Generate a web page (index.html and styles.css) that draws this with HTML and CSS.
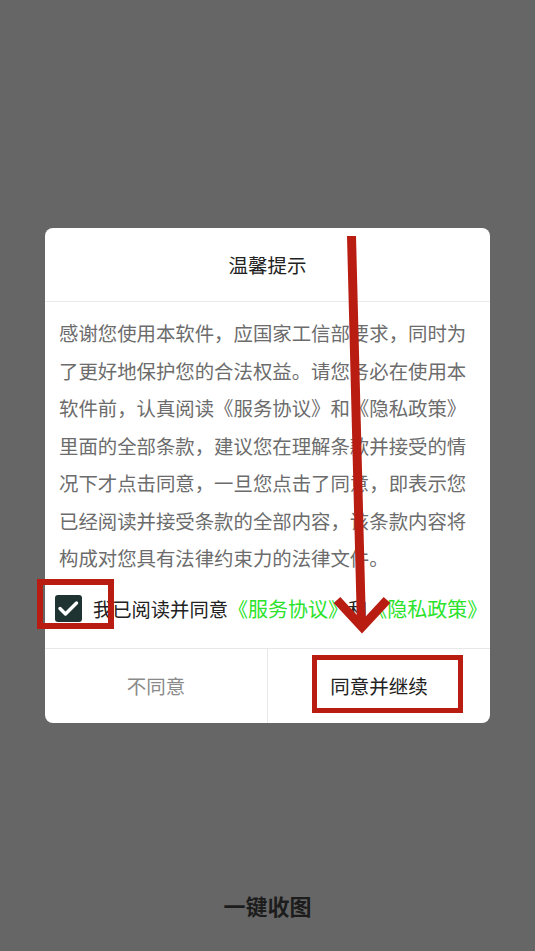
FILE: index.html
```html
<!DOCTYPE html>
<html lang="zh-CN">
<head>
<meta charset="utf-8">
<title>温馨提示</title>
<link rel="stylesheet" href="styles.css">
</head>
<body>
<div class="screen">
  <div class="dialog">
    <div class="title">温馨提示</div>
    <div class="content">感谢您使用本软件，应国家工信部要求，同时为了更好地保护您的合法权益。请您务必在使用本软件前，认真阅读《服务协议》和《隐私政策》里面的全部条款，建议您在理解条款并接受的情况下才点击同意，一旦您点击了同意，即表示您已经阅读并接受条款的全部内容，该条款内容将构成对您具有法律约束力的法律文件。</div>
    <div class="agree">
      <span class="checkbox">
        <svg width="27" height="27" viewBox="0 0 27 27"><rect x="0" y="0" width="27" height="27" rx="3" fill="#1f3332"/><polyline points="5,13.5 10.5,19 21.5,8" fill="none" stroke="#fff" stroke-width="3.4" stroke-linecap="round" stroke-linejoin="round"/></svg>
      </span>
      <span class="label">我已阅读并同意<span class="link">《服务协议》</span>和<span class="link">《隐私政策》</span></span>
    </div>
    <div class="actions">
      <div class="btn btn-cancel">不同意</div>
      <div class="btn btn-ok">同意并继续</div>
    </div>
  </div>
  <div class="footer">一键收图</div>
</div>
<svg class="overlay" width="535" height="951" viewBox="0 0 535 951">
  <line x1="351.5" y1="236" x2="361.5" y2="626" stroke="#b91d12" stroke-width="9"/>
  <polyline points="337,600 362,627 387,600" fill="none" stroke="#b91d12" stroke-width="9" stroke-linejoin="miter" stroke-miterlimit="10"/>
  <rect x="40" y="582" width="71" height="44" fill="none" stroke="#b91d12" stroke-width="6"/>
  <rect x="314.5" y="657.5" width="146" height="53" fill="none" stroke="#b91d12" stroke-width="5"/>
</svg>
</body>
</html>
```
FILE: styles.css
```css
html, body {
  margin: 0;
  padding: 0;
}
body {
  width: 535px;
  height: 951px;
  overflow: hidden;
  background: #666666;
  position: relative;
  font-family: "Noto Sans CJK SC", "Noto Sans", sans-serif;
}
.screen {
  display: flex;
  flex-direction: column;
  align-items: center;
  padding-top: 228px;
}
.dialog {
  width: 445px;
  background: #ffffff;
  border-radius: 8px;
  overflow: hidden;
}
.title {
  height: 73px;
  display: flex;
  align-items: center;
  justify-content: center;
  font-size: 19.5px;
  color: #222222;
  border-bottom: 1px solid #ebebeb;
}
.content {
  padding: 12px 14px 0 14px;
  font-size: 19.4px;
  line-height: 37.5px;
  color: #6c6c6c;
}
.agree {
  display: flex;
  align-items: center;
  height: 27px;
  padding: 18px 0 26px 10px;
}
.checkbox {
  display: flex;
  width: 27px;
  height: 27px;
}
.label {
  margin-left: 11px;
  font-size: 19.3px;
  color: #222222;
  white-space: nowrap;
}
.link {
  color: #2be32b;
  font-size: 20px;
}
.actions {
  display: flex;
  height: 74px;
  border-top: 1px solid #e8e8e8;
}
.btn {
  flex: 1;
  display: flex;
  align-items: center;
  justify-content: center;
  font-size: 19.5px;
}
.btn-cancel {
  color: #8a8a8a;
  border-right: 1px solid #e8e8e8;
}
.btn-ok {
  color: #222222;
}
.footer {
  margin-top: 167px;
  font-size: 22px;
  line-height: 30px;
  font-weight: 700;
  color: #1c1c1c;
}
.overlay {
  position: absolute;
  left: 0;
  top: 0;
  pointer-events: none;
}
```
